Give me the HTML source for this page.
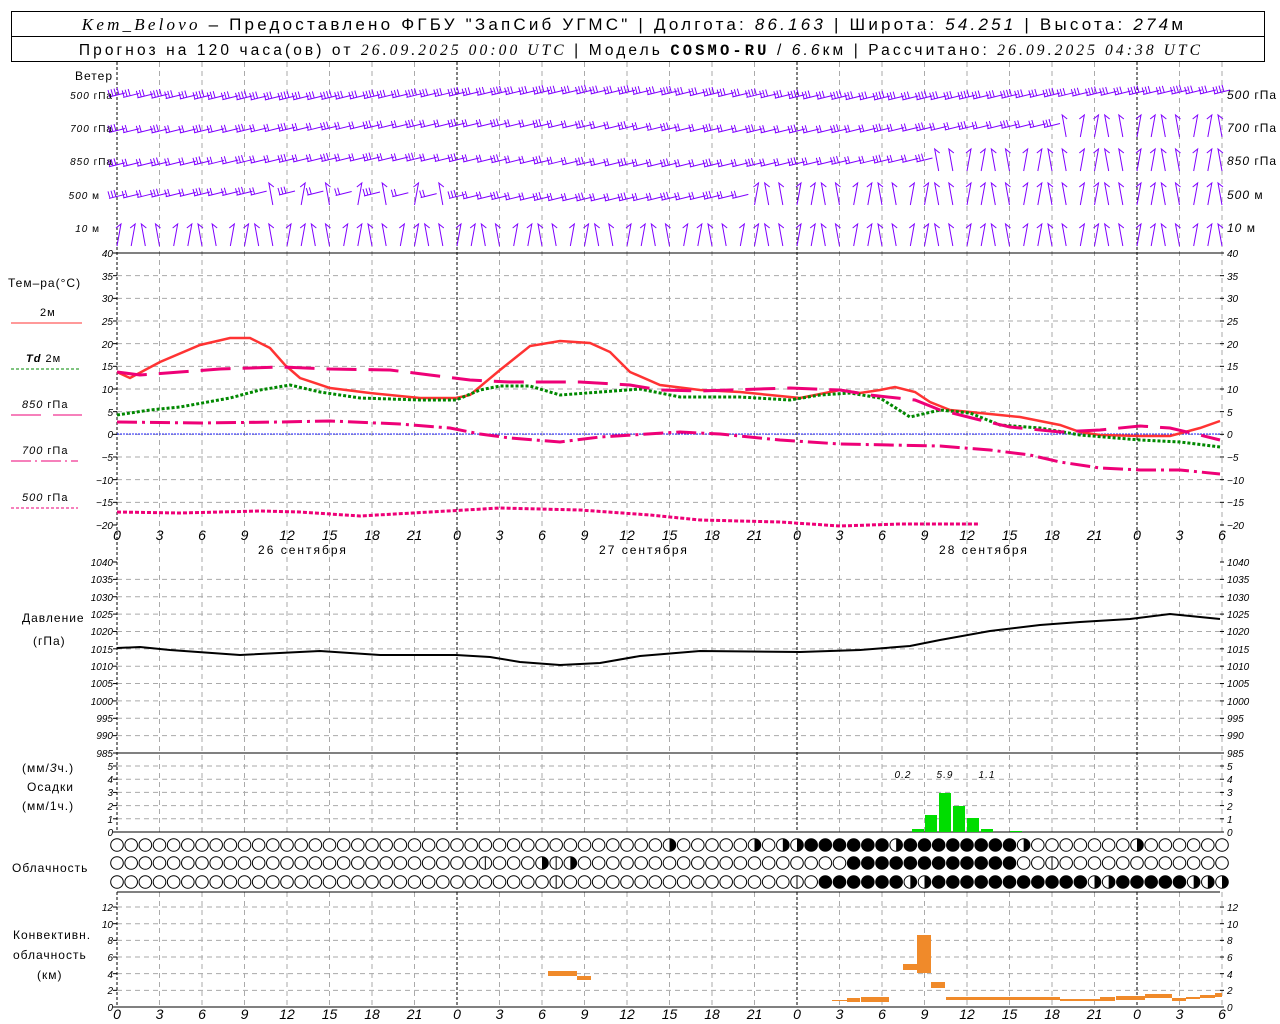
<!DOCTYPE html>
<html><head><meta charset="utf-8"><style>
body{margin:0;background:#fff;width:1280px;height:1024px;overflow:hidden}
svg{display:block}
text{font-family:"Liberation Sans","DejaVu Sans",sans-serif;fill:#000}
.n{font-size:10px;font-style:italic}
.l{font-size:12px;letter-spacing:1px}
.h{font-size:14px;font-style:italic}
</style></head><body>
<svg id="s" width="1280" height="1024" viewBox="0 0 1280 1024">
<rect x="11.5" y="11.5" width="1253" height="50" fill="none" stroke="#000"/>
<line x1="11" y1="36.5" x2="1265" y2="36.5" stroke="#000"/>
<text x="634" y="30" text-anchor="middle" style="font-size:17px;letter-spacing:3.2px"><tspan font-family="Liberation Serif" font-style="italic">Kem_Belovo</tspan> – Предоставлено ФГБУ "ЗапСиб УГМС" | Долгота: <tspan font-style="italic">86.163</tspan> | Широта: <tspan font-style="italic">54.251</tspan> | Высота: <tspan font-style="italic">274</tspan>м</text>
<text x="641" y="55" text-anchor="middle" style="font-size:15.5px;letter-spacing:3.1px">Прогноз на 120 часа(ов) от <tspan font-style="italic" font-family="Liberation Serif">26.09.2025 00:00 UTC</tspan>  | Модель <tspan font-weight="bold" font-family="Liberation Mono">COSMO-RU</tspan> / <tspan font-style="italic">6.6</tspan>км | Рассчитано: <tspan font-style="italic" font-family="Liberation Serif">26.09.2025 04:38 UTC</tspan></text>
<g id="grid"></g>
<g id="g"></g>
<g class="l" text-anchor="end">
<text x="113" y="80">Ветер</text>
<text x="113" y="99" font-size="10"><tspan font-style="italic">500</tspan> гПа</text>
<text x="113" y="132" font-size="10"><tspan font-style="italic">700</tspan> гПа</text>
<text x="113" y="165" font-size="10"><tspan font-style="italic">850</tspan> гПа</text>
<text x="100" y="199" font-size="10"><tspan font-style="italic">500</tspan> м</text>
<text x="100" y="232" font-size="10"><tspan font-style="italic">10</tspan>  м</text>
</g>
<g class="l" font-size="10">
<text x="1227" y="99"><tspan font-style="italic">500</tspan> гПа</text>
<text x="1227" y="132"><tspan font-style="italic">700</tspan> гПа</text>
<text x="1227" y="165"><tspan font-style="italic">850</tspan> гПа</text>
<text x="1227" y="199"><tspan font-style="italic">500</tspan> м</text>
<text x="1227" y="232"><tspan font-style="italic">10</tspan>  м</text>
</g>
<g class="l">
<text x="8" y="287">Тем–ра(°C)</text>
<text x="40" y="316" font-size="11">2м</text>
<line x1="11" y1="323" x2="82" y2="323" stroke="#f33"/>
<text x="26" y="362" font-size="11"><tspan font-style="italic" font-weight="bold">Td</tspan>  2м</text>
<line x1="11" y1="369" x2="80" y2="369" stroke="#080" stroke-dasharray="3,2"/>
<text x="22" y="408" font-size="11"><tspan font-style="italic">850</tspan> гПа</text>
<line x1="11" y1="415" x2="82" y2="415" stroke="#e07" stroke-dasharray="30,12"/>
<text x="22" y="454" font-size="11"><tspan font-style="italic">700</tspan> гПа</text>
<line x1="11" y1="461" x2="78" y2="461" stroke="#e07" stroke-dasharray="20,4,2,4"/>
<text x="22" y="501" font-size="11"><tspan font-style="italic">500</tspan> гПа</text>
<line x1="11" y1="508" x2="78" y2="508" stroke="#e07" stroke-dasharray="3,2"/>
<text x="22" y="622">Давление</text>
<text x="33" y="645">(гПа)</text>
<text x="22" y="772">(мм/<tspan font-style="italic">3</tspan>ч.)</text>
<text x="27" y="791">Осадки</text>
<text x="22" y="810">(мм/1ч.)</text>
<text x="12" y="872">Облачность</text>
<text x="13" y="939">Конвективн.</text>
<text x="13" y="959">облачность</text>
<text x="37" y="979">(км)</text>
</g>
<g class="n" text-anchor="end">
<text x="113" y="257">40</text><text x="113" y="280">35</text><text x="113" y="302">30</text><text x="113" y="325">25</text><text x="113" y="348">20</text><text x="113" y="370">15</text><text x="113" y="393">10</text><text x="113" y="416">5</text><text x="113" y="438">0</text><text x="113" y="461">−5</text><text x="113" y="484">−10</text><text x="113" y="506">−15</text><text x="113" y="529">−20</text>
<text x="113" y="566">1040</text><text x="113" y="583">1035</text><text x="113" y="601">1030</text><text x="113" y="618">1025</text><text x="113" y="635">1020</text><text x="113" y="653">1015</text><text x="113" y="670">1010</text><text x="113" y="687">1005</text><text x="113" y="705">1000</text><text x="113" y="722">995</text><text x="113" y="739">990</text><text x="113" y="757">985</text>
<text x="113" y="770">5</text><text x="113" y="783">4</text><text x="113" y="796">3</text><text x="113" y="810">2</text><text x="113" y="823">1</text><text x="113" y="836">0</text>
<text x="113" y="911">12</text><text x="113" y="928">10</text><text x="113" y="944">8</text><text x="113" y="961">6</text><text x="113" y="978">4</text><text x="113" y="994">2</text><text x="113" y="1011">0</text>
</g>
<g class="n">
<text x="1227" y="257">40</text><text x="1227" y="280">35</text><text x="1227" y="302">30</text><text x="1227" y="325">25</text><text x="1227" y="348">20</text><text x="1227" y="370">15</text><text x="1227" y="393">10</text><text x="1227" y="416">5</text><text x="1227" y="438">0</text><text x="1227" y="461">−5</text><text x="1227" y="484">−10</text><text x="1227" y="506">−15</text><text x="1227" y="529">−20</text>
<text x="1227" y="566">1040</text><text x="1227" y="583">1035</text><text x="1227" y="601">1030</text><text x="1227" y="618">1025</text><text x="1227" y="635">1020</text><text x="1227" y="653">1015</text><text x="1227" y="670">1010</text><text x="1227" y="687">1005</text><text x="1227" y="705">1000</text><text x="1227" y="722">995</text><text x="1227" y="739">990</text><text x="1227" y="757">985</text>
<text x="1227" y="770">5</text><text x="1227" y="783">4</text><text x="1227" y="796">3</text><text x="1227" y="810">2</text><text x="1227" y="823">1</text><text x="1227" y="836">0</text>
<text x="1227" y="911">12</text><text x="1227" y="928">10</text><text x="1227" y="944">8</text><text x="1227" y="961">6</text><text x="1227" y="978">4</text><text x="1227" y="994">2</text><text x="1227" y="1011">0</text>
</g>
<g class="h" text-anchor="middle">
<text x="117" y="540">0</text><text x="159.5" y="540">3</text><text x="202" y="540">6</text><text x="244.5" y="540">9</text><text x="287" y="540">12</text><text x="329.5" y="540">15</text><text x="372" y="540">18</text><text x="414.5" y="540">21</text><text x="457" y="540">0</text><text x="499.5" y="540">3</text><text x="542" y="540">6</text><text x="584.5" y="540">9</text><text x="627" y="540">12</text><text x="669.5" y="540">15</text><text x="712" y="540">18</text><text x="754.5" y="540">21</text><text x="797" y="540">0</text><text x="839.5" y="540">3</text><text x="882" y="540">6</text><text x="924.5" y="540">9</text><text x="967" y="540">12</text><text x="1009.5" y="540">15</text><text x="1052" y="540">18</text><text x="1094.5" y="540">21</text><text x="1137" y="540">0</text><text x="1179.5" y="540">3</text><text x="1222" y="540">6</text>
<text x="117" y="1019">0</text><text x="159.5" y="1019">3</text><text x="202" y="1019">6</text><text x="244.5" y="1019">9</text><text x="287" y="1019">12</text><text x="329.5" y="1019">15</text><text x="372" y="1019">18</text><text x="414.5" y="1019">21</text><text x="457" y="1019">0</text><text x="499.5" y="1019">3</text><text x="542" y="1019">6</text><text x="584.5" y="1019">9</text><text x="627" y="1019">12</text><text x="669.5" y="1019">15</text><text x="712" y="1019">18</text><text x="754.5" y="1019">21</text><text x="797" y="1019">0</text><text x="839.5" y="1019">3</text><text x="882" y="1019">6</text><text x="924.5" y="1019">9</text><text x="967" y="1019">12</text><text x="1009.5" y="1019">15</text><text x="1052" y="1019">18</text><text x="1094.5" y="1019">21</text><text x="1137" y="1019">0</text><text x="1179.5" y="1019">3</text><text x="1222" y="1019">6</text>
</g>
<g class="l" text-anchor="middle" style="letter-spacing:2px">
<text x="303" y="554">26 сентября</text><text x="644" y="554">27 сентября</text><text x="984" y="554">28 сентября</text>
</g>
<g class="n" font-size="12" text-anchor="middle" style="letter-spacing:1px">
<text x="903" y="778">0.2</text><text x="945" y="778">5.9</text><text x="987" y="778">1.1</text>
</g>
</svg>
<script>
var NS="http://www.w3.org/2000/svg",G=document.getElementById("g"),GR=document.getElementById("grid");
function el(p,t,a){var e=document.createElementNS(NS,t);for(var k in a)e.setAttribute(k,a[k]);p.appendChild(e);return e}
function X(h){return 117+h*340/24}
function hgrid(y){el(GR,"line",{x1:117,x2:1220,y1:y,y2:y,stroke:"#aaa","stroke-dasharray":"5,4"})}
for(var v=35;v>=-15;v-=5)hgrid(253+(40-v)*4.533);
for(v=1035;v>985;v-=5)hgrid(562+(1040-v)*3.473);
for(v=1;v<=5;v++)hgrid(832-13.2*v);
for(v=2;v<=12;v+=2)hgrid(1007-8.33*v);
function vseg(y1,y2){for(var i=0;i<=26;i++){var x=X(i*3),d=(i%8==0);el(GR,"line",{x1:x,x2:x,y1:y1,y2:y2,stroke:d?"#000":"#aaa","stroke-dasharray":d?"3,2":"5,4"})}}
vseg(62,832);vseg(892,1007);
[[253],[753],[832],[892],[1007]].forEach(function(a){el(GR,"line",{x1:117,x2:1220,y1:a[0],y2:a[0],stroke:"#000"})});
el(GR,"line",{x1:117,x2:1220,y1:434,y2:434,stroke:"#22f","stroke-dasharray":"2,1"});
function ticks(ys){ys.forEach(function(y){el(GR,"line",{x1:113,x2:117,y1:y,y2:y,stroke:"#000"});el(GR,"line",{x1:1220,x2:1224,y1:y,y2:y,stroke:"#000"})})}
var t=[];for(v=40;v>=-20;v-=5)t.push(253+(40-v)*4.533);for(v=1040;v>=985;v-=5)t.push(562+(1040-v)*3.473);for(v=0;v<=5;v++)t.push(832-13.2*v);for(v=0;v<=12;v+=2)t.push(1007-8.33*v);ticks(t);
function pl(pts,st){el(G,"polyline",Object.assign({points:pts,fill:"none"},st))}
pl("117,372 130,378 145,370 160,362 200,345 230,338 250,338 270,348 285,365 300,378 330,388 370,393 420,398 456,398 470,395 500,370 530,346 560,341 590,343 610,352 630,372 660,385 700,390 740,392 780,396 800,398 840,390 860,393 880,390 895,387 915,392 930,402 950,410 980,413 1020,417 1060,425 1080,432 1100,435 1140,436 1170,436 1200,428 1220,421",{stroke:"#f33","stroke-width":2.5});
pl("117,415 150,410 180,407 230,398 260,390 290,385 320,392 360,398 420,400 456,400 480,390 500,386 530,386 560,395 600,392 640,389 680,397 740,397 790,400 820,395 850,393 880,398 910,417 940,410 970,413 1000,425 1040,428 1080,435 1140,440 1180,442 1220,447",{stroke:"#080","stroke-width":3,"stroke-dasharray":"3,2"});
pl("117,372 140,375 180,372 220,369 280,367 330,369 390,370 430,375 470,380 510,382 580,382 630,385 660,390 700,391 760,389 790,388 840,390 870,395 915,400 940,410 980,420 1010,427 1060,432 1100,430 1140,426 1170,428 1200,435 1220,440",{stroke:"#e07","stroke-width":3,"stroke-dasharray":"30,12"});
pl("117,422 200,423 280,422 330,421 400,424 450,428 480,434 510,438 560,442 600,437 680,432 720,434 780,440 840,444 940,446 990,450 1030,455 1060,462 1100,468 1140,470 1180,470 1220,474",{stroke:"#e07","stroke-width":3,"stroke-dasharray":"20,5,3,5"});
pl("117,512 180,513 260,511 300,512 360,516 430,512 500,508 580,510 650,515 700,520 780,522 840,526 900,524 980,524",{stroke:"#e07","stroke-width":3,"stroke-dasharray":"4,2"});
pl("117,648 140,647 170,650 240,655 320,651 380,655 456,655 490,657 520,662 560,665 600,663 640,656 700,651 800,652 860,650 910,646 940,640 990,631 1040,625 1080,622 1130,619 1170,614 1200,617 1220,619",{stroke:"#000","stroke-width":2});
[[912,924,829],[925,937,815],[939,951,793],[953,965,806],[967,979,818],[981,993,829],[1010,1022,831]].forEach(function(b){el(G,"rect",{x:b[0],y:b[2],width:b[1]-b[0],height:832-b[2],fill:"#0d0"})});
[[548,577,971,976],[577,591,976,980],[832,848,1000,1001],[847,860,998,1002],[861,875,997,1002],[875,889,997,1002],[903,918,964,970],[917,931,935,973],[931,945,982,988],[946,1060,997,1000],[1060,1100,999,1001],[1100,1115,997,1001],[1116,1145,996,1000],[1145,1172,994,998],[1172,1186,998,1001],[1186,1200,997,999],[1200,1215,995,998],[1215,1222,993,997]].forEach(function(b){el(G,"rect",{x:b[0],y:b[2],width:b[1]-b[0],height:b[3]-b[2],fill:"#f08a2a"})});
function cloud(x,y,f){el(G,"circle",{cx:x,cy:y,r:6.3,fill:f==2?"#000":"#fff",stroke:"#000","stroke-width":1});if(f==1)el(G,"path",{d:"M"+x+" "+(y-6.3)+"A6.3 6.3 0 0 1 "+x+" "+(y+6.3)+"Z",fill:"#000"});if(f==3)el(G,"line",{x1:x,x2:x,y1:y-6,y2:y+6,stroke:"#000"})}
for(var h=0;h<=78;h++){var x=X(h);
var f1=0;if(h>=49&&h<=63)f1=2;if(h==47||h==48||h==55||h==64||h==72||h==39||h==45)f1=1;
var f2=0;if(h>=52&&h<=63)f2=2;if(h==26||h==31)f2=3;if(h==30||h==32)f2=1;if(h==66)f2=3;
var f3=0;if(h>=50)f3=2;if(h==48)f3=3;if(h==56||h==57||h==69||h==70||h==76||h==77||h==78)f3=1;if(h==31)f3=3;
cloud(x,845,f1);cloud(x,863,f2);cloud(x,882,f3);}
var P="#7f00ff";
function wb(x,y,s){var ln="M"+(x-8)+" "+(y+2)+"L"+(x+8)+" "+(y-2);for(var k=0;k<s;k++){var bx=x-7+k*3;ln+="M"+bx+" "+(y+2-k*.7)+"l-2 -7"}el(G,"path",{d:ln,stroke:P,fill:"none"})}
function vb(x,y,d){el(G,"path",{d:"M"+x+" "+(y+11)+"L"+(x+4*d)+" "+(y-11)+"l"+(-5*d)+" 4",stroke:P,fill:"none"})}
var L=[[95,78,3],[128,66,2],[162,57,2],[196,44,2],[240,-1,1]];
for(h=0;h<=78;h++){x=X(h);
L.forEach(function(l,i){var y=l[0]+Math.sin(h/7+i)*3;
if(h<=l[1]&&!(i==3&&h>10&&h<24&&h%2)){wb(x,y,l[2]+(h%3==0?1:0))}
else{var yy=i==4?l[0]-5:l[0]-2;vb(x,yy,(h%4<2)?1:-1)}});}
</script>
</body></html>
